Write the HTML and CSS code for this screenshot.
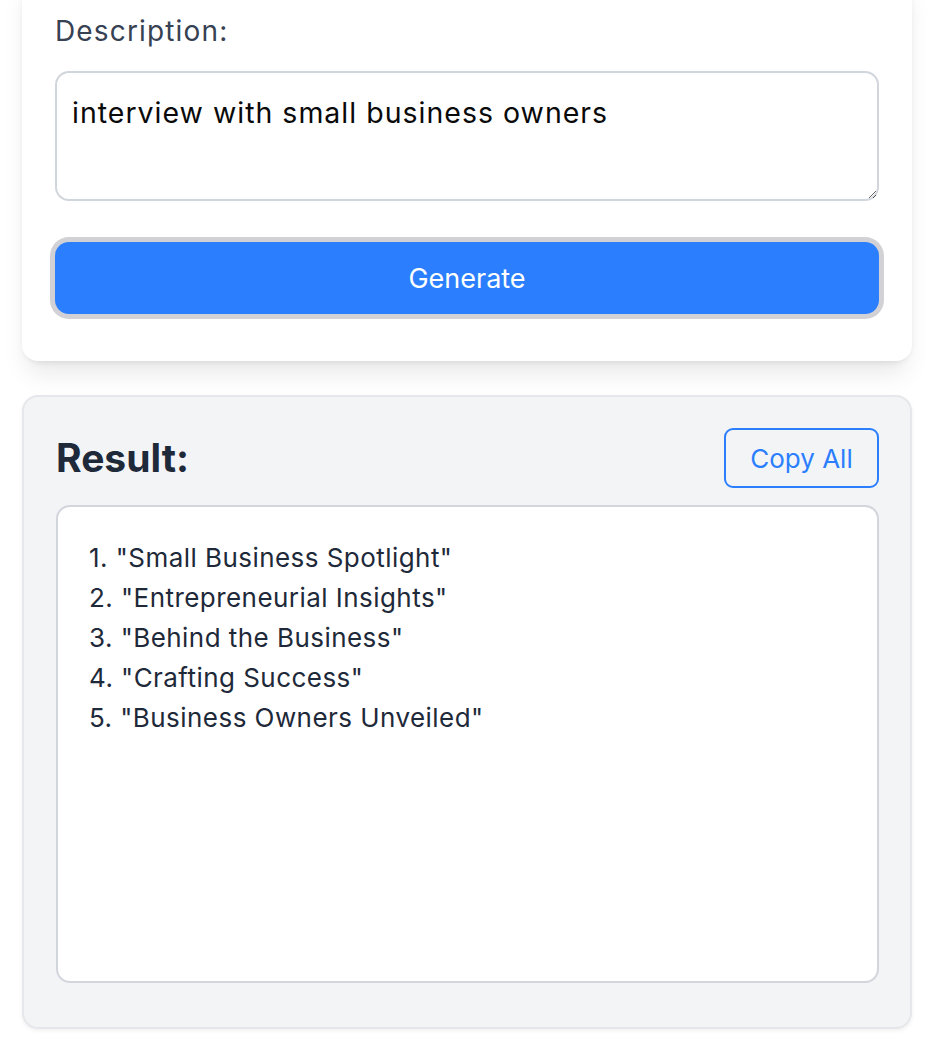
FILE: index.html
```html
<!DOCTYPE html>
<html lang="en">
<head>
<meta charset="utf-8">
<title>Title Generator</title>
<link rel="stylesheet" href="styles.css">
</head>
<body>
<main class="page">
  <section class="card form-card">
    <label class="field-label" for="desc">Description:</label>
    <textarea id="desc" class="desc-input">interview with small business owners</textarea>
    <button class="generate-btn" type="button">Generate</button>
  </section>

  <section class="card result-card">
    <div class="result-head">
      <h2 class="result-title">Result:</h2>
      <button class="copy-btn" type="button">Copy All</button>
    </div>
    <div class="result-box">
      <ol class="result-list">
        <li>"Small Business Spotlight"</li>
        <li>"Entrepreneurial Insights"</li>
        <li>"Behind the Business"</li>
        <li>"Crafting Success"</li>
        <li>"Business Owners Unveiled"</li>
      </ol>
    </div>
  </section>
</main>
</body>
</html>
```

FILE: styles.css
```css
* { box-sizing: border-box; }

html, body {
  margin: 0;
  padding: 0;
  background: #ffffff;
}

body {
  font-family: Inter, "Noto Sans", "Liberation Sans", sans-serif;
  color: #1e2939;
}

.page {
  display: flex;
  flex-direction: column;
  gap: 34px;
  padding: 0 20px 0 22px;
}

.card {
  border-radius: 16px;
}

.form-card {
  margin-top: -25px;
  background: #ffffff;
  padding: 35px 33px 47px 33px;
  display: flex;
  flex-direction: column;
  box-shadow: 0 17px 26px -5px rgba(0,0,0,0.09), 0 7px 10px -7px rgba(0,0,0,0.09), 0 0 6px rgba(0,0,0,0.04);
}

.field-label {
  font-size: 28px;
  line-height: 42px;
  letter-spacing: 1.15px;
  color: #364153;
  margin-bottom: 19px;
}

.desc-input {
  display: block;
  width: 100%;
  height: 130px;
  border: 2px solid #d1d5dc;
  border-radius: 14px;
  padding: 19px 15px 13px 15px;
  font-family: inherit;
  font-size: 28.5px;
  line-height: 42px;
  letter-spacing: 1px;
  color: #0a0a0a;
  background: #ffffff;
  resize: vertical;
  outline: none;
  margin-bottom: 41px;
}

.generate-btn {
  display: block;
  width: 100%;
  height: 72px;
  border: none;
  border-radius: 14px;
  background: #2b7fff;
  color: #ffffff;
  font-family: inherit;
  font-size: 27px;
  box-shadow: 0 0 0 5px #d1d1d6;
  cursor: pointer;
}

.result-card {
  background: #f3f4f6;
  border: 2px solid #e5e7eb;
  padding: 31px 31px 44px 32px;
  box-shadow: 0 2px 4px rgba(0,0,0,0.06);
  margin-bottom: 30px;
}

.result-head {
  display: flex;
  justify-content: space-between;
  align-items: center;
  margin-bottom: 17px;
}

.result-title {
  margin: 0;
  font-size: 39px;
  line-height: 60px;
  font-weight: 700;
  color: #1e2939;
}

.copy-btn {
  width: 155px;
  height: 60px;
  padding: 0;
  border: 2px solid #2b7fff;
  border-radius: 9px;
  background: transparent;
  color: #2b7fff;
  font-family: inherit;
  font-size: 26px;
  cursor: pointer;
}

.result-box {
  height: 478px;
  background: #ffffff;
  border: 2px solid #d1d5dc;
  border-radius: 14px;
  padding: 31px 31px;
}

.result-list {
  margin: 0;
  padding: 0;
  list-style: none;
  counter-reset: item;
  font-size: 26px;
  line-height: 40px;
  letter-spacing: 0.45px;
  color: #1e2939;
}

.result-list li {
  counter-increment: item;
}

.result-list li::before {
  content: counter(item) ". ";
}
```
